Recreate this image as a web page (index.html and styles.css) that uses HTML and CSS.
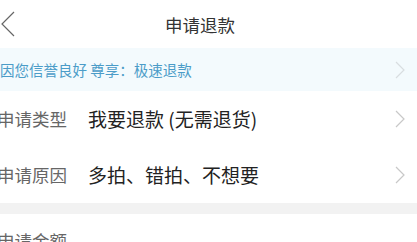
FILE: index.html
```html
<!DOCTYPE html>
<html lang="zh-CN">

<head>
    <meta charset="UTF-8">
    <meta name="viewport" content="width=device-width, initial-scale=1.0">
    <title>申请退款</title>
    <link rel="stylesheet" href="styles.css">
</head>

<body>
    <header class="top-bar">
        <a class="back" href="#">
            <svg width="16" height="26" viewBox="0 0 16 26">
                <path d="M14 1 L2 13 L14 25" fill="none" stroke="#666" stroke-width="1.2"/>
            </svg>
        </a>
        <h1>申请退款</h1>
    </header>

    <div class="credit-tip">
        <span>因您信誉良好 尊享：极速退款</span>
        <svg class="arrow" width="10" height="18" viewBox="0 0 10 18">
            <path d="M1 1 L9 9 L1 17" fill="none" stroke="#d8dde0" stroke-width="1.2"/>
        </svg>
    </div>

    <div class="form-group">
        <div class="form-row">
            <span class="label">申请类型</span>
            <span class="value">我要退款 (无需退货)</span>
            <svg class="arrow" width="10" height="18" viewBox="0 0 10 18">
                <path d="M1 1 L9 9 L1 17" fill="none" stroke="#c8c8c8" stroke-width="1.2"/>
            </svg>
        </div>
        <div class="form-row">
            <span class="label">申请原因</span>
            <span class="value">多拍、错拍、不想要</span>
            <svg class="arrow" width="10" height="18" viewBox="0 0 10 18">
                <path d="M1 1 L9 9 L1 17" fill="none" stroke="#c8c8c8" stroke-width="1.2"/>
            </svg>
        </div>
    </div>

    <div class="divider"></div>

    <div class="amount-row">
        <span class="label">申请金额</span>
    </div>
</body>

</html>
```

FILE: styles.css
```css
* {
    margin: 0;
    padding: 0;
    box-sizing: border-box;
    font-family: "Noto Sans CJK SC", "Noto Sans", sans-serif;
}

body {
    background-color: #fff;
    width: 417px;
    overflow: hidden;
}

.top-bar {
    height: 48px;
    display: flex;
    align-items: center;
    justify-content: center;
    position: relative;
}

.top-bar h1 {
    font-size: 17.5px;
    font-weight: normal;
    color: #333;
    margin-right: 17px;
}

.back {
    position: absolute;
    left: 0;
    top: 11px;
    display: flex;
}

.credit-tip {
    height: 43px;
    background-color: #f3fafd;
    display: flex;
    align-items: center;
    justify-content: space-between;
    padding-right: 12px;
    color: #4b9cc8;
    font-size: 14.5px;
}

.form-row {
    display: flex;
    align-items: center;
    padding-right: 12px;
}

.form-row:first-child {
    height: 55px;
}

.form-row:last-child {
    height: 57px;
}

.label {
    font-size: 17.5px;
    color: #666;
    width: 91px;
    margin-left: -3px;
    flex-shrink: 0;
}

.value {
    flex-grow: 1;
    font-size: 19px;
    color: #222;
}

.divider {
    height: 11px;
    background-color: #f2f2f2;
}

.amount-row {
    padding-top: 14px;
}
```
